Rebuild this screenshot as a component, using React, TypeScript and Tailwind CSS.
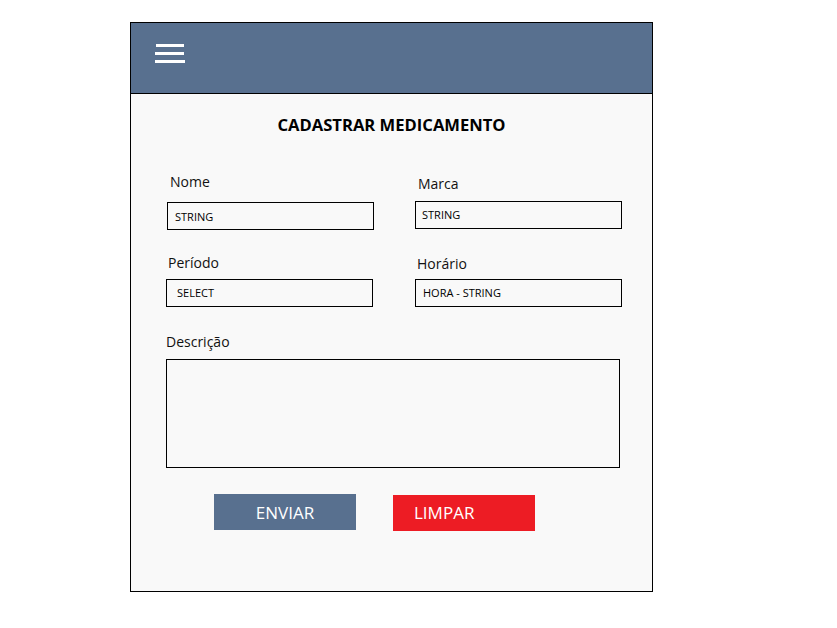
export default function App() {
  const font = { fontFamily: '"Open Sans", "Noto Sans", sans-serif' }

  return (
    <div className="w-[837px] h-[628px] bg-white pt-[22px] pl-[130px]" style={font}>
      <div className="w-[523px] h-[570px] border border-black bg-[#f9f9f9] flex flex-col">
        {/* Header */}
        <div className="h-[71px] bg-[#58708f] border-b border-black pl-[24px] pt-[21px]">
          <div className="flex flex-col gap-[5px] w-[30px]">
            <div className="h-[3px] w-[28px] ml-[1px] bg-white" />
            <div className="h-[3px] w-[29px] bg-white" />
            <div className="h-[3px] w-[30px] bg-white" />
          </div>
        </div>

        {/* Title */}
        <h1 className="mt-[21px] text-center text-[16.6px] leading-[20px] font-bold text-black">
          CADASTRAR MEDICAMENTO
        </h1>

        {/* Row 1 */}
        <div className="flex mt-[37px]">
          <div className="ml-[36px] w-[207px] flex flex-col">
            <label className="pl-[3px] text-[14px] leading-[20px] text-[#111]">Nome</label>
            <div className="mt-[10px] h-[28px] border border-black flex items-center pl-[7px] pt-[3px] text-[11px] text-black">
              STRING
            </div>
          </div>
          <div className="ml-[41px] w-[207px] flex flex-col mt-[2px]">
            <label className="pl-[3px] text-[14px] leading-[20px] text-[#111]">Marca</label>
            <div className="mt-[7px] h-[28px] border border-black flex items-center pl-[6px] pt-[1px] text-[11px] text-black">
              STRING
            </div>
          </div>
        </div>

        {/* Row 2 */}
        <div className="flex mt-[23px]">
          <div className="ml-[35px] w-[207px] flex flex-col">
            <label className="pl-[2px] text-[14px] leading-[20px] text-[#111]">Período</label>
            <div className="mt-[6px] h-[28px] border border-black flex items-center pl-[10px] pt-[1px] text-[11px] text-black">
              SELECT
            </div>
          </div>
          <div className="ml-[42px] w-[207px] flex flex-col mt-[1px]">
            <label className="pl-[2px] text-[14px] leading-[20px] text-[#111]">Horário</label>
            <div className="mt-[5px] h-[28px] border border-black flex items-center pl-[7px] pt-[1px] text-[11px] text-black">
              HORA - STRING
            </div>
          </div>
        </div>

        {/* Descrição */}
        <div className="ml-[35px] mt-[25px] flex flex-col">
          <label className="text-[14px] leading-[20px] text-[#111]">Descrição</label>
          <div className="mt-[7px] w-[454px] h-[109px] border border-black" />
        </div>

        {/* Buttons */}
        <div className="flex items-start mt-[26px] ml-[83px]">
          <button className="w-[142px] h-[36px] bg-[#58708f] text-white text-[17px] flex items-center justify-center pt-[1px]">
            ENVIAR
          </button>
          <button className="ml-[37px] mt-[1px] w-[142px] h-[36px] bg-[#ed1c24] text-white text-[17px] flex items-center pl-[21px]">
            LIMPAR
          </button>
        </div>
      </div>
    </div>
  )
}
